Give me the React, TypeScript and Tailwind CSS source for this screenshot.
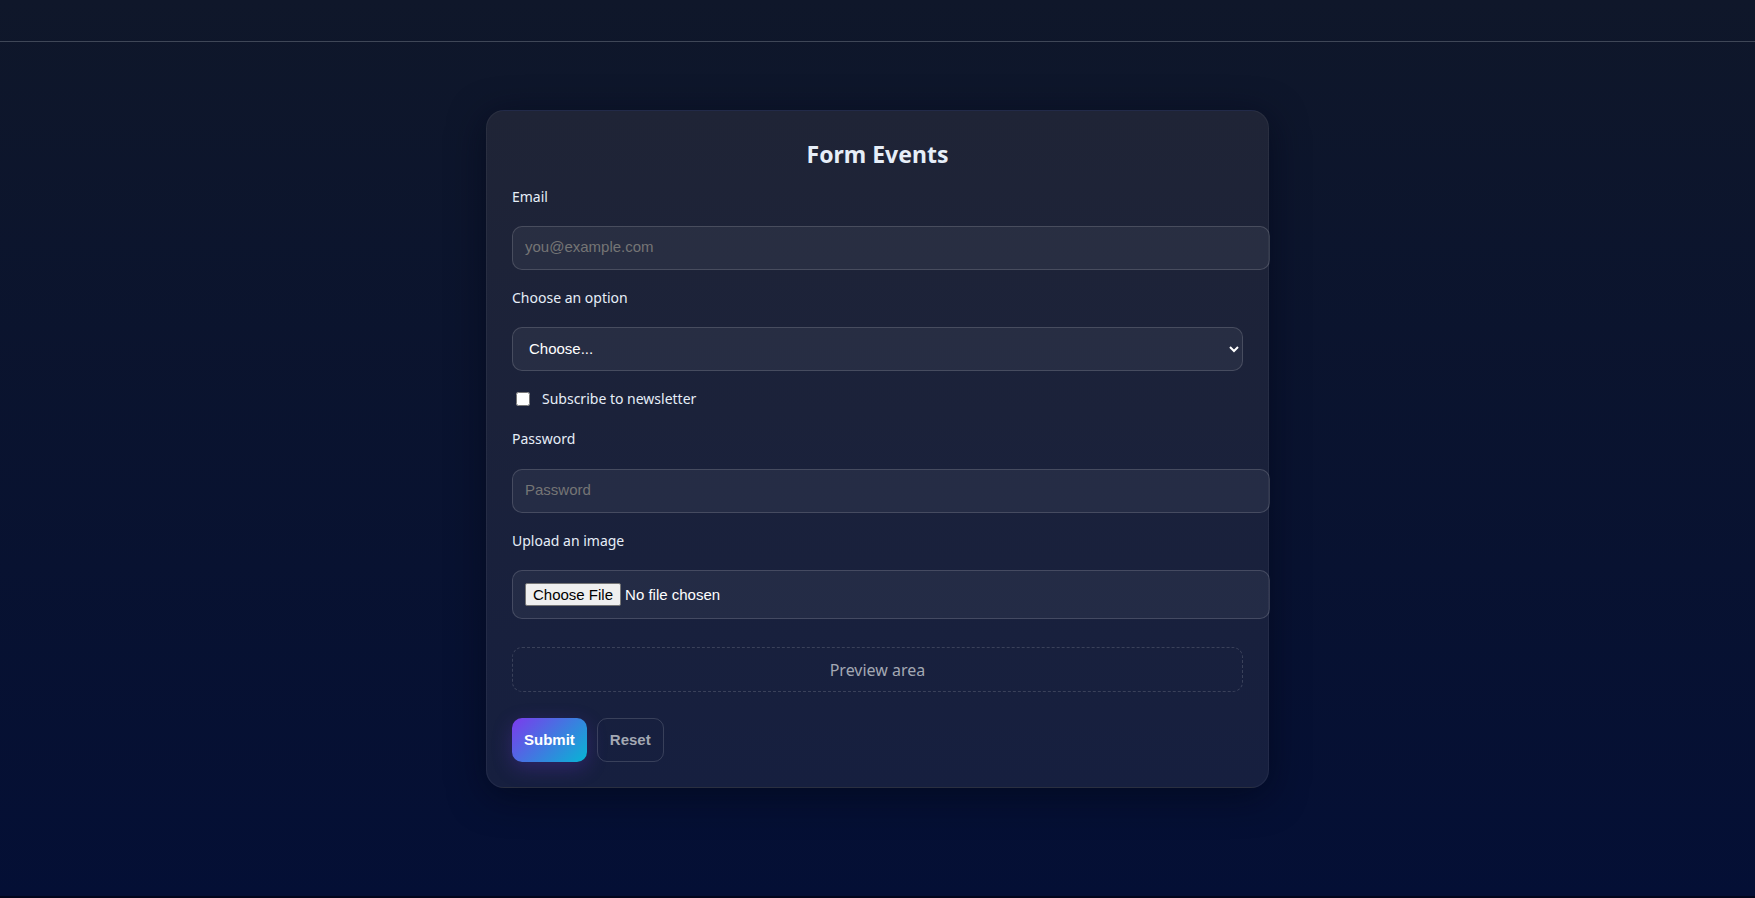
import React, { useState } from "react";

const label = "block text-[14px] leading-5 text-[#e6eef8]";
const field =
  "block rounded-[10px] border border-white/15 bg-white/5 px-3 font-['Liberation_Sans',Arial,sans-serif] text-[15px] text-white outline-none placeholder:text-[#757575]";
const wide = "-mr-[27px] w-[calc(100%+27px)]";

export default function App() {
  const [preview, setPreview] = useState("Preview area");

  return (
    <div className="flex min-h-screen flex-col border-b-2 border-[#02061c] bg-[linear-gradient(180deg,#0f172a,#040f35)] font-['Noto_Sans',sans-serif] text-[#e6eef8]">
      <header className="h-[42px] border-b border-[#3f4757]" />
      <main className="flex justify-center px-6 py-[68px]">
        <form
          onSubmit={(e) => e.preventDefault()}
          onReset={() => setPreview("Preview area")}
          className="w-full max-w-[783px] rounded-[18px] border border-white/5 bg-[linear-gradient(180deg,#1f2436,#161f3f)] px-[25px] pt-[27px] pb-[25px] shadow-[0_8px_36px_rgba(2,6,23,0.6)]"
        >
          <h1 className="text-center text-[23px] leading-8 font-bold">Form Events</h1>

          <label htmlFor="email" className={`${label} mt-[17px]`}>
            Email
          </label>
          <input id="email" type="email" placeholder="you@example.com" className={`${field} ${wide} mt-[19px] h-11 pb-[3px]`} />

          <label htmlFor="option" className={`${label} mt-[18px]`}>
            Choose an option
          </label>
          <select id="option" defaultValue="" className={`${field} mt-[19px] h-11 w-full pr-0 pb-[2px]`}>
            <option value="">Choose...</option>
            <option value="a">Option A</option>
            <option value="b">Option B</option>
          </select>

          <label className={`${label} mt-[18px] flex items-center`}>
            <input type="checkbox" className="mr-3 ml-1 size-[14px]" />
            Subscribe to newsletter
          </label>

          <label htmlFor="password" className={`${label} mt-5`}>
            Password
          </label>
          <input id="password" type="password" placeholder="Password" className={`${field} ${wide} mt-5 h-11 pb-[3px]`} />

          <label htmlFor="image" className={`${label} mt-[18px]`}>
            Upload an image
          </label>
          <input
            id="image"
            type="file"
            onChange={(e) => setPreview(e.target.files?.[0]?.name ?? "Preview area")}
            className={`${field} ${wide} mt-[19px] h-[49px] py-3 file:mr-1 file:h-[23px] file:rounded-xs file:border file:border-[#767676] file:bg-[#efefef] file:px-[7px] file:text-black`}
          />

          <div className="mt-7 flex h-[45px] items-center justify-center rounded-[10px] border border-dashed border-white/15 text-[16px] text-[#a3a8b3]">
            {preview}
          </div>

          <div className="mt-[26px] flex gap-[10px] font-['Liberation_Sans',Arial,sans-serif] text-[15px] font-bold">
            <button
              type="submit"
              className="h-11 rounded-[10px] bg-[linear-gradient(135deg,#7c3aed,#06b6d4)] px-3 text-white shadow-[0_6px_20px_rgba(124,58,237,0.25)]"
            >
              Submit
            </button>
            <button type="reset" className="h-11 rounded-[10px] border border-white/15 px-3 text-[#a3a8b3]">
              Reset
            </button>
          </div>
        </form>
      </main>
    </div>
  );
}
